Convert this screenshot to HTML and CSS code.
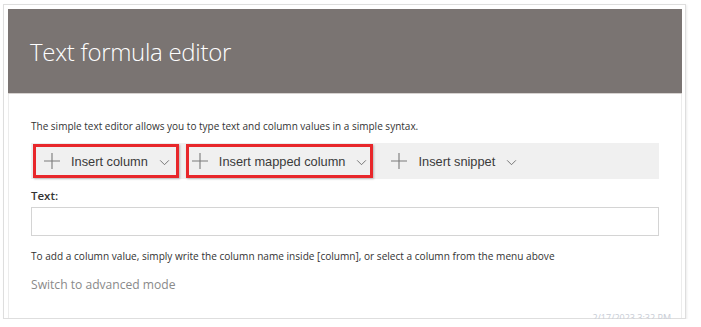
FILE: index.html
```html
<!DOCTYPE html>
<html lang="en">
<head>
  <meta charset="UTF-8" />
  <title>Text formula editor</title>
  <link rel="stylesheet" href="styles.css">
</head>
<body>
  <div class="dialog">
    <!-- Header -->
    <div class="dialog-header">
      <h1>Text formula editor</h1>
    </div>
    <!-- Body -->
    <div class="dialog-body">
      <p class="intro">The simple text editor allows you to type text and column values in a simple syntax.</p>
      <div class="toolbar">
        <button class="tool-btn marked">
          <svg class="plus" viewBox="0 0 16 16"><path d="M8 0v16M0 8h16" /></svg>
          <span>Insert column</span>
          <svg class="chevron" viewBox="0 0 12 8"><path d="M1 1.5l5 5 5-5" /></svg>
        </button>
        <button class="tool-btn marked tight">
          <svg class="plus" viewBox="0 0 16 16"><path d="M8 0v16M0 8h16" /></svg>
          <span>Insert mapped column</span>
          <svg class="chevron" viewBox="0 0 12 8"><path d="M1 1.5l5 5 5-5" /></svg>
        </button>
        <button class="tool-btn">
          <svg class="plus" viewBox="0 0 16 16"><path d="M8 0v16M0 8h16" /></svg>
          <span>Insert snippet</span>
          <svg class="chevron" viewBox="0 0 12 8"><path d="M1 1.5l5 5 5-5" /></svg>
        </button>
      </div>
      <label class="field-label" for="text-input">Text:</label>
      <input type="text" id="text-input" class="text-input" />
      <p class="hint">To add a column value, simply write the column name inside [column], or select a column from the menu above</p>
      <a class="mode-link">Switch to advanced mode</a>
    </div>
    <div class="stamp">2/17/2023 3:32 PM</div>
  </div>
</body>
</html>
```

FILE: styles.css
```css
/* Reset */
* {
  margin: 0;
  padding: 0;
  box-sizing: border-box;
}
body {
  font-family: 'Open Sans', 'Liberation Sans', sans-serif;
  background: #fff;
  color: #333;
}
/* Dialog frame */
.dialog {
  position: relative;
  width: 683px;
  height: 315px;
  margin: 4px 0 0 3px;
  border: 1px solid #dedede;
  padding: 4px 3px 0 4px;
  box-shadow: 1px 1px 2px rgba(0, 0, 0, 0.08);
}
.dialog-header {
  height: 85px;
  background: #7a7472;
  border-bottom: 1px solid #d6d2d0;
  padding: 0 0 0 22px;
  display: flex;
  align-items: center;
}
.dialog-header h1 {
  font-family: 'Open Sans', sans-serif;
  font-weight: 300;
  font-size: 24px;
  color: #fff;
  letter-spacing: -0.3px;
  margin-top: 1px;
}
.dialog-body {
  padding: 25px 22px 0 22px;
  border-left: 1px solid #ececec;
  border-right: 1px solid #ececec;
  height: 224px;
}
.intro {
  font-size: 10px;
  color: #333;
  line-height: 14px;
}
/* Toolbar */
.toolbar {
  margin-top: 10px;
  height: 36px;
  background: #f0f0f0;
  display: flex;
  align-items: center;
  gap: 7px;
  padding-left: 2px;
}
.tool-btn {
  height: 34px;
  border: 3px solid transparent;
  background: transparent;
  display: flex;
  align-items: center;
  padding: 0 6px 0 8px;
  font-family: 'Liberation Sans', Arial, sans-serif;
  font-size: 12.8px;
  color: #3a3a3a;
  cursor: pointer;
}
.tool-btn.marked {
  border-color: #e8272b;
  box-shadow: 1px 1px 2px rgba(0, 0, 0, 0.25);
}
.tool-btn.tight {
  padding: 0 3px 0 3px;
}
.plus {
  width: 16px;
  height: 16px;
  stroke: #7a7a7a;
  stroke-width: 1.1;
  fill: none;
  margin-right: 11px;
}
.chevron {
  width: 11px;
  height: 7px;
  stroke: #666;
  stroke-width: 1;
  fill: none;
  margin-left: 11px;
  margin-top: 3px;
}
/* Text field */
.field-label {
  display: block;
  margin-top: 9px;
  font-size: 11.5px;
  font-weight: 600;
  color: #333;
  line-height: 16px;
}
.text-input {
  display: block;
  width: 100%;
  height: 29px;
  margin-top: 3px;
  border: 1px solid #d4d4d4;
  outline: none;
}
.hint {
  margin-top: 13px;
  font-size: 10.08px;
  line-height: 14px;
  color: #333;
}
.mode-link {
  display: block;
  margin-top: 13px;
  font-size: 12.1px;
  color: #8a8a8a;
  line-height: 17px;
}
/* Faint timestamp clipped by the frame */
.stamp {
  position: absolute;
  right: 14px;
  bottom: -6px;
  font-size: 9px;
  color: #c8cdd6;
}
```
